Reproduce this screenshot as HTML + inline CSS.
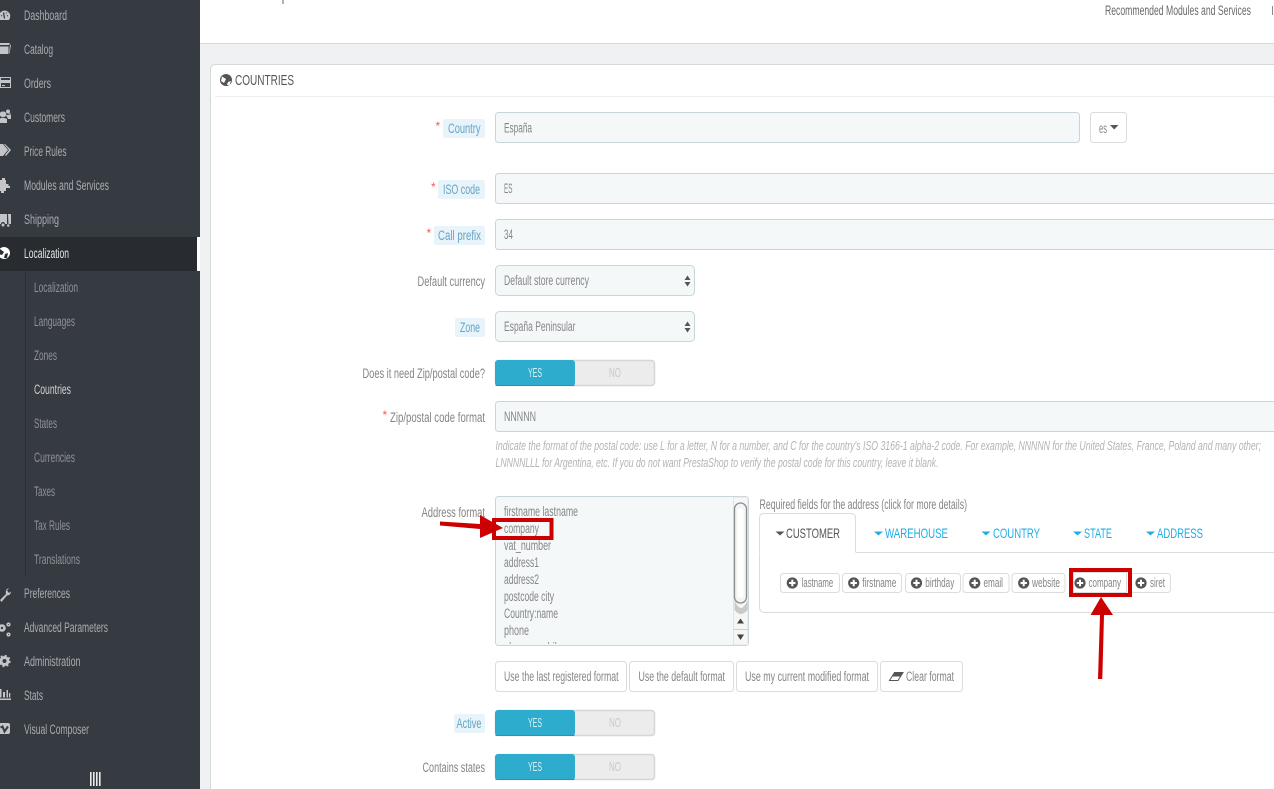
<!DOCTYPE html>
<html><head><meta charset="utf-8"><title>Countries</title>
<style>
html,body{margin:0;padding:0;background:#fff;width:1274px;height:789px;overflow:hidden}
svg{display:block}
text{font-family:"Liberation Sans",sans-serif;font-size:13.5px;fill:#858585;white-space:pre}
.n text{fill:#a9adb1}
.s text{fill:#8f9398}
.l{fill:#63a5c4!important}
.v{fill:#868686!important}
.h{font-style:italic;fill:#b4b4b4!important;font-size:13px}
.t{fill:#1eaee6!important;font-size:14px}
.c{font-size:12.5px;fill:#858585!important}
.y{fill:#d5eff6!important;font-size:13px}
.o{fill:#c9c9c9!important;font-size:13px}
.i{fill:#f5f8f9;stroke:#c7d6db}
.b{fill:#fff;stroke:#dcdcdc}
.a{fill:#e8f4fa}
.st{fill:#ff5450!important;font-size:12px}
</style></head><body>
<svg width="1274" height="789" viewBox="0 0 1274 789" xmlns="http://www.w3.org/2000/svg">
<defs>
<clipPath id="ta"><rect x="496" y="497" width="236" height="147"/></clipPath>
<g id="sw"><rect x="495.5" y="0.5" width="159" height="25" rx="3" fill="#ececec" stroke="#d6d6d6" stroke-width="1.5"/><rect x="495" y="0" width="80" height="26" rx="3" fill="#2eacce"/><rect x="495.5" y="25" width="79" height="1" fill="#2595b3"/></g>
<g id="pl"><circle r="5.6" fill="#555"/><path d="M-3.2 0H3.2M0-3.2V3.2" stroke="#fff" stroke-width="2"/></g>
</defs>
<rect width="1274" height="789" fill="#eff1f2"/>
<rect x="200" width="1074" height="43" fill="#fff"/>
<rect x="200" y="43" width="1074" height="1" fill="#d3d8db"/>
<rect x="282.5" y="0" width="1" height="4" fill="#666"/>
<rect x="1272" y="6" width="1" height="9" fill="#888"/>
<text x="1105" y="15" textLength="146" lengthAdjust="spacingAndGlyphs" style="fill:#6a6a6a">Recommended Modules and Services</text>

<!-- sidebar -->
<rect width="200" height="789" fill="#363a41"/>
<rect y="237" width="197" height="34" fill="#282b30"/>
<rect x="197" y="237" width="3" height="34" fill="#fff"/>
<rect x="25" y="271" width="1" height="306" fill="#2b2e33"/>
<g class="n">
<text x="24" y="20" textLength="43" lengthAdjust="spacingAndGlyphs">Dashboard</text>
<text x="24" y="54" textLength="29" lengthAdjust="spacingAndGlyphs">Catalog</text>
<text x="24" y="88" textLength="27" lengthAdjust="spacingAndGlyphs">Orders</text>
<text x="24" y="122" textLength="41" lengthAdjust="spacingAndGlyphs">Customers</text>
<text x="24" y="156" textLength="42.5" lengthAdjust="spacingAndGlyphs">Price Rules</text>
<text x="24" y="190" textLength="85" lengthAdjust="spacingAndGlyphs">Modules and Services</text>
<text x="24" y="224" textLength="35" lengthAdjust="spacingAndGlyphs">Shipping</text>
<text x="24" y="258" textLength="45" lengthAdjust="spacingAndGlyphs" style="fill:#e4e5e6">Localization</text>
<text x="24" y="598" textLength="46" lengthAdjust="spacingAndGlyphs">Preferences</text>
<text x="24" y="632" textLength="84" lengthAdjust="spacingAndGlyphs">Advanced Parameters</text>
<text x="24" y="666" textLength="56.5" lengthAdjust="spacingAndGlyphs">Administration</text>
<text x="24" y="700" textLength="19" lengthAdjust="spacingAndGlyphs">Stats</text>
<text x="24" y="734" textLength="65" lengthAdjust="spacingAndGlyphs">Visual Composer</text>
</g>
<g class="s">
<text x="34" y="292" textLength="44" lengthAdjust="spacingAndGlyphs">Localization</text>
<text x="34" y="326" textLength="41" lengthAdjust="spacingAndGlyphs">Languages</text>
<text x="34" y="360" textLength="23" lengthAdjust="spacingAndGlyphs">Zones</text>
<text x="34" y="394" textLength="37" lengthAdjust="spacingAndGlyphs" style="fill:#cfd1d3">Countries</text>
<text x="34" y="428" textLength="23" lengthAdjust="spacingAndGlyphs">States</text>
<text x="34" y="462" textLength="41" lengthAdjust="spacingAndGlyphs">Currencies</text>
<text x="34" y="496" textLength="21" lengthAdjust="spacingAndGlyphs">Taxes</text>
<text x="34" y="530" textLength="36" lengthAdjust="spacingAndGlyphs">Tax Rules</text>
<text x="34" y="564" textLength="46" lengthAdjust="spacingAndGlyphs">Translations</text>
</g>
<!-- sidebar icons -->
<g fill="#c3c5c8">
<path d="M-1 20V15.500A5.700 5.700 0 0 1 10.300 15.500Q10.300 18 9 20Z"/>
<path d="M-1 45H9L10 43H0ZM-1 46.500H8.500V54H-1ZM10 44.500L11 45 9.500 53.500 9 53.500Z"/>
<path d="M0 77H11V88H0ZM1 78V80H10V78ZM1 83V87H10V83ZM2 85H5V86H2Z" fill-rule="evenodd"/>
<path d="M3 111.500A2.800 2.800 0 1 1 3 117 2.800 2.800 0 1 1 3 111.500ZM8 109.500A2 2 0 1 1 8 113.500 2 2 0 1 1 8 109.500ZM-1 123V119Q3 116.500 7 119V123ZM6 115H11V119H8ZM8.500 113.500H11V114.500H8.500Z"/>
<path d="M-1 144H3L8 150 3 156 -1 156ZM5 144L11 150 6 156 5 155 9 150 4 144Z"/>
<path d="M0 180H2V178H5V180H6V184H8.500V186H10V188H6V191H4V193H1V191H0Z"/>
<path d="M-1 214H7V224H5A2 2 0 0 0 1 224H-1ZM8 214H11V224H8.500ZM1.500 225A1.500 1.500 0 1 1 4.500 225 1.500 1.500 0 1 1 1.500 225ZM7 225.500A1 1 0 1 1 9.500 225.500 1 1 0 1 1 7 225.500Z"/>
<path d="M0 600L6 594Q5 589 9 588L7 590.500 9 593 11 591.500Q10.500 595.500 7 595.500L1.500 602Z"/>
<rect x="-1" y="698.500" width="12" height="1.500"/>
<path d="M0 689H1.500V697.500H0ZM3 692H5V697.500H3ZM6.500 690H8V697.500H6.500ZM9 693H10.300V697.500H9Z"/>
<rect x="-1" y="723" width="11" height="11" rx="2"/>
</g>
<path d="M4.500 18.500L3.500 12.500" stroke="#363a41" stroke-width="1.300"/>
<path d="M1 15.500L2 16M8 15.500L7 16M6.500 12.500L6 13.500" stroke="#363a41"/>
<path d="M0.500 727.500L2.500 726.500 4.500 731.500 8 726.500" fill="none" stroke="#363a41" stroke-width="2"/>
<g fill="none" stroke="#c3c5c8">
<circle cx="2" cy="628" r="2.500" stroke-width="2.600"/>
<circle cx="8.500" cy="624.500" r="1.300" stroke-width="1.500"/>
<circle cx="8.500" cy="634.500" r="1.300" stroke-width="1.500"/>
<circle cx="4.500" cy="661" r="3.500" stroke-width="3"/>
<circle cx="4.500" cy="661" r="5.400" stroke-width="1.500" stroke-dasharray="2 2.240"/>
</g>
<circle cx="4" cy="253" r="6" fill="#fff"/>
<path d="M0 249L4 252 2 255 -1 254ZM5 254L8 253 7 258 4 258Z" fill="#282b30"/>
<g fill="#e8e8e8"><rect x="90" y="772" width="1.600" height="14"/><rect x="93" y="772" width="1.600" height="14"/><rect x="96" y="772" width="1.600" height="14"/><rect x="99" y="772" width="1.600" height="14"/></g>

<!-- panel -->
<path d="M210.500 789V69.500Q210.500 64.500 215.500 64.500H1274V789Z" fill="#fff"/>
<path d="M210.500 789V69.500Q210.500 64.500 215.500 64.500H1274" fill="none" stroke="#d3d8db"/>
<rect x="215" y="96" width="1059" height="1" fill="#eeeeee"/>
<circle cx="226" cy="80" r="6" fill="#555"/>
<path d="M222 76.500L226 79 224 83 221 81ZM228 82L231 81 229.500 85 227 85Z" fill="#fff"/>
<text x="235" y="85" textLength="59" lengthAdjust="spacingAndGlyphs" style="fill:#555;font-size:15px">COUNTRIES</text>

<!-- Country -->
<text class="st" x="435.500" y="130">*</text>
<rect class="a" x="443" y="119" width="42" height="19" rx="2"/>
<text class="l" x="448" y="133" textLength="32.500" lengthAdjust="spacingAndGlyphs">Country</text>
<rect class="i" x="495.500" y="112.500" width="584" height="30" rx="3"/>
<text class="v" x="504" y="132.500" textLength="28" lengthAdjust="spacingAndGlyphs">España</text>
<rect class="b" x="1090.500" y="112.500" width="36" height="30" rx="3"/>
<text class="v" x="1099" y="133" textLength="8" lengthAdjust="spacingAndGlyphs">es</text>
<path d="M1110 125H1118.500L1114.200 129.500Z" fill="#555"/>
<!-- ISO -->
<text class="st" x="431" y="191">*</text>
<rect class="a" x="438" y="180" width="47" height="19" rx="2"/>
<text class="l" x="443" y="194" textLength="37" lengthAdjust="spacingAndGlyphs">ISO code</text>
<rect class="i" x="495.500" y="173.500" width="800" height="30" rx="3"/>
<text class="v" x="504" y="193" textLength="8.500" lengthAdjust="spacingAndGlyphs">ES</text>
<!-- Call -->
<text class="st" x="426.500" y="237">*</text>
<rect class="a" x="434" y="226" width="51" height="19" rx="2"/>
<text class="l" x="438" y="240" textLength="43" lengthAdjust="spacingAndGlyphs">Call prefix</text>
<rect class="i" x="495.500" y="219.500" width="800" height="30" rx="3"/>
<text class="v" x="504" y="239" textLength="9" lengthAdjust="spacingAndGlyphs">34</text>
<!-- currency -->
<text x="417.500" y="286" textLength="67.500" lengthAdjust="spacingAndGlyphs">Default currency</text>
<rect class="i" x="495.500" y="265.500" width="199" height="30" rx="4"/>
<text class="v" x="504" y="285" textLength="85" lengthAdjust="spacingAndGlyphs">Default store currency</text>
<path d="M684.500 280L687.500 275.500 690.500 280ZM684.500 282L687.500 286.500 690.500 282Z" fill="#555"/>
<!-- zone -->
<rect class="a" x="455" y="318" width="30" height="19" rx="2"/>
<text class="l" x="460" y="332" textLength="20" lengthAdjust="spacingAndGlyphs">Zone</text>
<rect class="i" x="495.500" y="311.500" width="199" height="30" rx="4"/>
<text class="v" x="504" y="331" textLength="71.500" lengthAdjust="spacingAndGlyphs">España Peninsular</text>
<path d="M684.500 326L687.500 321.500 690.500 326ZM684.500 328L687.500 332.500 690.500 328Z" fill="#555"/>
<!-- zip switch -->
<text x="362.500" y="378" textLength="122.500" lengthAdjust="spacingAndGlyphs">Does it need Zip/postal code?</text>
<use href="#sw" y="360"/>
<text class="y" x="528" y="377" textLength="14" lengthAdjust="spacingAndGlyphs">YES</text>
<text class="o" x="609" y="377" textLength="12" lengthAdjust="spacingAndGlyphs">NO</text>
<!-- zip format -->
<text class="st" x="382.500" y="419">*</text>
<text x="390" y="422" textLength="95" lengthAdjust="spacingAndGlyphs">Zip/postal code format</text>
<rect class="i" x="495.500" y="401.500" width="800" height="30" rx="3"/>
<text class="v" x="504" y="421" textLength="32" lengthAdjust="spacingAndGlyphs">NNNNN</text>
<text class="h" x="495.500" y="450" textLength="765.500" lengthAdjust="spacingAndGlyphs">Indicate the format of the postal code: use L for a letter, N for a number, and C for the country's ISO 3166-1 alpha-2 code. For example, NNNNN for the United States, France, Poland and many other;</text>
<text class="h" x="495.500" y="467" textLength="443" lengthAdjust="spacingAndGlyphs">LNNNNLLL for Argentina, etc. If you do not want PrestaShop to verify the postal code for this country, leave it blank.</text>
<!-- address format -->
<text x="421.500" y="517" textLength="63.500" lengthAdjust="spacingAndGlyphs">Address format</text>
<rect class="i" x="495.500" y="496.500" width="253" height="149" rx="3"/>
<g clip-path="url(#ta)">
<text class="v" x="504" y="516" textLength="74" lengthAdjust="spacingAndGlyphs">firstname lastname</text>
<text class="v" x="504" y="533" textLength="35" lengthAdjust="spacingAndGlyphs">company</text>
<text class="v" x="504" y="550" textLength="47" lengthAdjust="spacingAndGlyphs">vat_number</text>
<text class="v" x="504" y="567" textLength="35" lengthAdjust="spacingAndGlyphs">address1</text>
<text class="v" x="504" y="584" textLength="35" lengthAdjust="spacingAndGlyphs">address2</text>
<text class="v" x="504" y="601" textLength="50" lengthAdjust="spacingAndGlyphs">postcode city</text>
<text class="v" x="504" y="618" textLength="54" lengthAdjust="spacingAndGlyphs">Country:name</text>
<text class="v" x="504" y="635" textLength="25" lengthAdjust="spacingAndGlyphs">phone</text>
<text class="v" x="504" y="652" textLength="58" lengthAdjust="spacingAndGlyphs">phone_mobile</text>
</g>
<!-- scrollbar -->
<rect x="733.500" y="497" width="14.500" height="148" fill="#f6f6f6" stroke="#d8d8d8" stroke-width="0.600"/>
<path d="M734.500 600Q741 616 747.500 600V610Q741 618 734.500 610Z" fill="#c9c9c9"/>
<rect x="734.500" y="503" width="12" height="100" rx="6" fill="#f4f4f4" stroke="#8c8c8c" stroke-width="1.300"/>
<rect x="737.500" y="508" width="6" height="90" rx="3" fill="#fff"/>
<path d="M737 623.500L740.500 618.500 744 623.500Z" fill="#444"/>
<rect x="734" y="629" width="14" height="1" fill="#cfcfcf"/>
<path d="M737 634.500L740.500 640 744 634.500Z" fill="#444"/>
<!-- format buttons -->
<rect class="b" x="495.500" y="661.500" width="131" height="30" rx="3"/>
<text class="v" x="504" y="681" textLength="114.500" lengthAdjust="spacingAndGlyphs">Use the last registered format</text>
<rect class="b" x="629.500" y="661.500" width="104" height="30" rx="3"/>
<text class="v" x="638.500" y="681" textLength="86.500" lengthAdjust="spacingAndGlyphs">Use the default format</text>
<rect class="b" x="736.500" y="661.500" width="141" height="30" rx="3"/>
<text class="v" x="745" y="681" textLength="124" lengthAdjust="spacingAndGlyphs">Use my current modified format</text>
<rect class="b" x="880.500" y="661.500" width="82" height="30" rx="3"/>
<path d="M889.500 680.500L894.500 672.500H903L898 680.500Z" fill="#fff" stroke="#555"/>
<path d="M892 676.500L894.500 672H903.500L901 676.500Z" fill="#555"/>
<text class="v" x="906" y="681" textLength="48" lengthAdjust="spacingAndGlyphs">Clear format</text>
<!-- required -->
<text x="759.500" y="509" textLength="207.500" lengthAdjust="spacingAndGlyphs">Required fields for the address (click for more details)</text>
<path d="M856 552.500H1274M759.500 553V518Q759.500 513.500 764 513.500H851Q855.500 513.500 855.500 518V552.500" fill="none" stroke="#dcdcdc"/>
<path d="M1274 612.500H765Q759.500 612.500 759.500 607V553.500" fill="none" stroke="#dcdcdc"/>
<path d="M775.500 531.500H784.500L780 535.500Z" fill="#555"/><text x="786" y="538" textLength="54" lengthAdjust="spacingAndGlyphs" style="fill:#555;font-size:14px">CUSTOMER</text>
<path d="M874 531.500H883L878.500 535.500Z" fill="#1eaee6"/><text class="t" x="885" y="538" textLength="63" lengthAdjust="spacingAndGlyphs">WAREHOUSE</text>
<path d="M981.500 531.500H990.500L986 535.500Z" fill="#1eaee6"/><text class="t" x="993" y="538" textLength="47" lengthAdjust="spacingAndGlyphs">COUNTRY</text>
<path d="M1073 531.500H1082L1077.500 535.500Z" fill="#1eaee6"/><text class="t" x="1084" y="538" textLength="28" lengthAdjust="spacingAndGlyphs">STATE</text>
<path d="M1146 531.500H1155L1150.500 535.500Z" fill="#1eaee6"/><text class="t" x="1157" y="538" textLength="46" lengthAdjust="spacingAndGlyphs">ADDRESS</text>
<!-- chips -->
<rect class="b" x="780.500" y="573.500" width="59" height="19" rx="3"/><use href="#pl" x="792.300" y="583"/><text class="c" x="801.700" y="587" textLength="31.500" lengthAdjust="spacingAndGlyphs">lastname</text>
<rect class="b" x="842.500" y="573.500" width="59" height="19" rx="3"/><use href="#pl" x="853.700" y="583"/><text class="c" x="862.300" y="587" textLength="34" lengthAdjust="spacingAndGlyphs">firstname</text>
<rect class="b" x="905.500" y="573.500" width="55" height="19" rx="3"/><use href="#pl" x="916.500" y="583"/><text class="c" x="925.300" y="587" textLength="29" lengthAdjust="spacingAndGlyphs">birthday</text>
<rect class="b" x="963" y="573.500" width="46" height="19" rx="3"/><use href="#pl" x="974.700" y="583"/><text class="c" x="983.500" y="587" textLength="19.500" lengthAdjust="spacingAndGlyphs">email</text>
<rect class="b" x="1012" y="573.500" width="53" height="19" rx="3"/><use href="#pl" x="1023.700" y="583"/><text class="c" x="1032" y="587" textLength="28" lengthAdjust="spacingAndGlyphs">website</text>
<rect class="b" x="1130.500" y="573.500" width="40" height="19" rx="3"/><use href="#pl" x="1141" y="583"/><text class="c" x="1150" y="587" textLength="15" lengthAdjust="spacingAndGlyphs">siret</text>
<rect x="1071" y="570" width="59" height="25" fill="#fff" stroke="#cc0000" stroke-width="4"/>
<rect x="1073.500" y="572.500" width="53" height="20" fill="#fff" stroke="#dcdcdc"/>
<use href="#pl" x="1080" y="583"/><text class="c" x="1088.500" y="587" textLength="32.500" lengthAdjust="spacingAndGlyphs">company</text>
<!-- arrows -->
<path d="M1098 679L1100 615H1090.500L1101 597 1113 615H1104L1102.300 679Z" fill="#cc0000"/>
<path d="M494 520H551.500V538H494Z" fill="none" stroke="#cc0000" stroke-width="4"/>
<path d="M440 521.500L480 524V515L503 528 480 538V529L440 525.500Z" fill="#cc0000"/>
<!-- bottom switches -->
<rect class="a" x="454" y="714" width="31" height="19" rx="2"/>
<text class="l" x="456.500" y="728" textLength="25" lengthAdjust="spacingAndGlyphs">Active</text>
<use href="#sw" y="710"/>
<text class="y" x="528" y="727" textLength="14" lengthAdjust="spacingAndGlyphs">YES</text>
<text class="o" x="609" y="727" textLength="12" lengthAdjust="spacingAndGlyphs">NO</text>
<text x="422.500" y="772" textLength="62.500" lengthAdjust="spacingAndGlyphs">Contains states</text>
<use href="#sw" y="754"/>
<text class="y" x="528" y="771" textLength="14" lengthAdjust="spacingAndGlyphs">YES</text>
<text class="o" x="609" y="771" textLength="12" lengthAdjust="spacingAndGlyphs">NO</text>
</svg>
</body></html>
